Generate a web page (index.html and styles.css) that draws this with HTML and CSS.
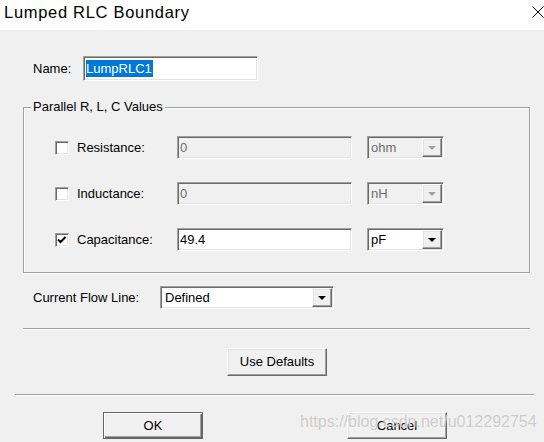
FILE: index.html
```html
<!DOCTYPE html>
<html>
<head>
<meta charset="utf-8">
<title>Lumped RLC Boundary</title>
<link rel="stylesheet" href="styles.css">
</head>
<body>
<div class="window">
  <div class="titlebar">
    <span class="title">Lumped RLC Boundary</span>
    <svg class="close" width="12" height="12" viewBox="0 0 12 12"><path d="M0.5 0.5 L11.5 11.5 M11.5 0.5 L0.5 11.5" stroke="#000" stroke-width="1" fill="none"/></svg>
  </div>
  <div class="content">
    <div class="name-row">
      <span class="lbl name-lbl">Name:</span>
      <div class="sunken field name-field"><span class="sel">LumpRLC1</span></div>
    </div>

    <div class="group">
      <div class="group-title">Parallel R, L, C Values</div>
      <div class="rows">
        <div class="row">
          <span class="check"></span>
          <span class="lbl row-lbl">Resistance:</span>
          <div class="sunken field value disabled">0</div>
          <div class="sunken combo unit disabled"><span class="combo-text">ohm</span><span class="raised combo-btn"><i class="arrow"></i></span></div>
        </div>
        <div class="row">
          <span class="check"></span>
          <span class="lbl row-lbl">Inductance:</span>
          <div class="sunken field value disabled">0</div>
          <div class="sunken combo unit disabled"><span class="combo-text">nH</span><span class="raised combo-btn"><i class="arrow"></i></span></div>
        </div>
        <div class="row">
          <span class="check"><svg width="12" height="12" viewBox="0 0 12 12"><path d="M2 5.5 L4.5 8 L9.5 3" stroke="#000" stroke-width="2" fill="none"/></svg></span>
          <span class="lbl row-lbl">Capacitance:</span>
          <div class="sunken field value">49.4</div>
          <div class="sunken combo unit"><span class="combo-text">pF</span><span class="raised combo-btn"><i class="arrow"></i></span></div>
        </div>
      </div>
    </div>

    <div class="flow-row">
      <span class="lbl flow-lbl">Current Flow Line:</span>
      <div class="sunken combo flow-combo"><span class="combo-text">Defined</span><span class="raised combo-btn"><i class="arrow"></i></span></div>
    </div>

    <div class="sep sep1"></div>

    <div class="defaults-row">
      <button class="raised btn defaults-btn">Use Defaults</button>
    </div>

    <div class="sep sep2"></div>

    <div class="actions">
      <button class="raised btn ok-btn">OK</button>
      <button class="raised btn cancel-btn">Cancel</button>
    </div>
  </div>
  <div class="watermark">https://blog.csdn.net/u012292754</div>
</div>
</body>
</html>
```

FILE: styles.css
```css
* { box-sizing: border-box; }

html, body {
  margin: 0;
  padding: 0;
  width: 544px;
  height: 442px;
  overflow: hidden;
  background: #f0f0f0;
}

.window {
  position: relative;
  width: 544px;
  height: 442px;
  overflow: hidden;
  font-family: "Liberation Sans", Arial, sans-serif;
  font-size: 13px;
  color: #000;
}

.titlebar {
  height: 30px;
  background: #fff;
  display: flex;
  justify-content: space-between;
  align-items: flex-start;
  padding-left: 4px;
}

.title {
  font-size: 16.5px;
  letter-spacing: 0.7px;
  line-height: 21px;
  padding-top: 2px;
  color: #000;
}

.close {
  margin-top: 6px;
  display: block;
}

.content {
  height: 412px;
  overflow: hidden;
  background: #f0f0f0;
}

.lbl {
  line-height: 16px;
  white-space: nowrap;
}

/* 3D borders */
.sunken {
  border: 1px solid;
  border-color: #a0a0a0 #fff #fff #a0a0a0;
  box-shadow: inset 1px 1px 0 #696969, inset -1px -1px 0 #e3e3e3;
  background: #fff;
}

.raised {
  border: 1px solid;
  border-color: #fff #696969 #696969 #fff;
  box-shadow: inset -1px -1px 0 #a0a0a0, inset 1px 1px 0 #e3e3e3;
  background: #f0f0f0;
}

/* Name row */
.name-row {
  display: flex;
  align-items: center;
  padding-left: 33px;
  margin-top: 26px;
}

.name-lbl { width: 50px; }

.field {
  display: flex;
  align-items: center;
  padding-left: 2px;
}

.name-field {
  width: 175px;
  height: 25px;
}

.sel {
  background: #0078d7;
  color: #fff;
  line-height: 17px;
  padding: 0 1px 0 0;
}

/* Group box */
.group {
  margin: 26px 14px 0 23px;
  border: 1px solid #a0a0a0;
  box-shadow: 1px 1px 0 #fff, inset 1px 1px 0 #fff;
  padding: 0 0 21px 0;
}

.group-title {
  width: max-content;
  margin: -9px 0 0 7px;
  padding: 0 2px;
  line-height: 16px;
  background: #f0f0f0;
}

.rows {
  margin-top: 21px;
  padding-left: 31px;
  display: flex;
  flex-direction: column;
  gap: 23px;
}

.row {
  display: flex;
  align-items: center;
  height: 23px;
}

.check {
  width: 14px;
  height: 14px;
  border: 1px solid;
  border-color: #a0a0a0 #fff #fff #a0a0a0;
  box-shadow: inset 1px 1px 0 #696969, inset -1px -1px 0 #e3e3e3;
  background: #fff;
  display: flex;
  align-items: center;
  justify-content: center;
  margin-top: 1px;
}

.check svg { display: block; }

.row-lbl {
  width: 108px;
  padding-left: 8px;
}

.value {
  width: 175px;
  height: 23px;
}

.disabled {
  background: #f0f0f0;
  color: #6d6d6d;
}

.combo {
  display: flex;
  align-items: center;
  justify-content: space-between;
  height: 23px;
  padding: 1px 1px 1px 3px;
}

.unit {
  width: 77px;
  margin-left: 15px;
}

.combo-text { line-height: 16px; }

.combo-btn {
  width: 20px;
  height: 19px;
  display: flex;
  align-items: center;
  justify-content: center;
}

.arrow {
  display: block;
  width: 0;
  height: 0;
  border-left: 4px solid transparent;
  border-right: 4px solid transparent;
  border-top: 4px solid #000;
  margin-top: 1px;
}

.disabled .arrow { border-top-color: #a0a0a0; }

/* Current flow */
.flow-row {
  display: flex;
  align-items: center;
  padding-left: 33px;
  margin-top: 13px;
}

.flow-lbl { width: 127px; }

.flow-combo {
  width: 174px;
  padding-left: 4px;
}

/* separators */
.sep {
  height: 2px;
  border-top: 1px solid #a0a0a0;
  border-bottom: 1px solid #fff;
}

.sep1 { margin: 19px 14px 0 23px; }
.sep2 { margin: 18px 10px 0 15px; }

/* buttons */
.btn {
  font-family: "Liberation Sans", Arial, sans-serif;
  font-size: 13px;
  color: #000;
  padding: 0;
  width: 100px;
  line-height: 16px;
}

.defaults-row {
  padding-left: 227px;
  margin-top: 18px;
}

.defaults-btn { height: 28px; }

.actions {
  display: flex;
  padding-left: 103px;
  margin-top: 16px;
  gap: 144px;
}

.ok-btn {
  height: 27px;
  border: 1px solid #646464;
  box-shadow: inset 1px 1px 0 #fff, inset -1px -1px 0 #696969, inset -2px -2px 0 #a0a0a0;
}

.cancel-btn { height: 27px; }

.watermark {
  position: absolute;
  left: 300px;
  top: 412px;
  font-family: "Liberation Sans", Arial, sans-serif;
  font-size: 16px;
  line-height: 20px;
  color: rgba(175, 175, 175, 0.65);
  text-shadow: 0 0 1px rgba(255, 255, 255, 0.9);
  white-space: nowrap;
  pointer-events: none;
}
```
